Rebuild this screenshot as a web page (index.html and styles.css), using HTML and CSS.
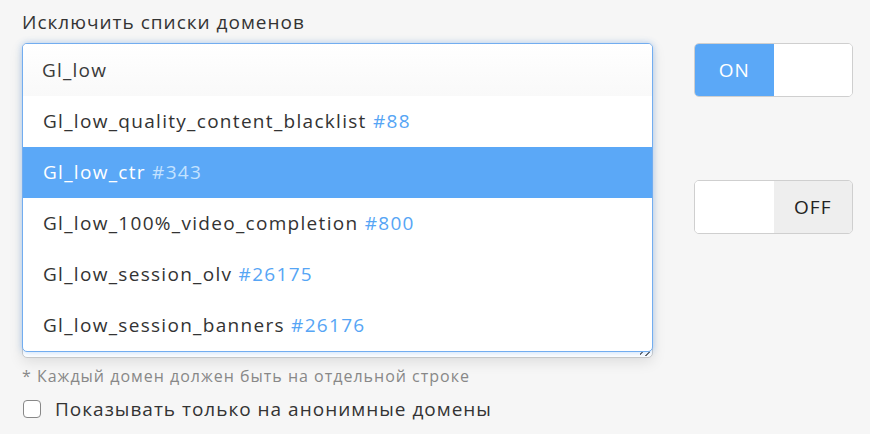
FILE: index.html
```html
<!DOCTYPE html>
<html lang="ru">
<head>
<meta charset="utf-8">
<link rel="stylesheet" href="styles.css">
</head>
<body>
<div class="page">
  <div class="title">Исключить списки доменов</div>
  <div class="row">
    <div class="left">
      <div class="textarea">
        <span class="grip"></span>
        <div class="combo">
          <div class="combo-input">Gl_low</div>
          <ul class="options">
            <li class="opt">Gl_low_quality_content_blacklist <span class="id">#88</span></li>
            <li class="opt active">Gl_low_ctr <span class="id">#343</span></li>
            <li class="opt">Gl_low_100%_video_completion <span class="id">#800</span></li>
            <li class="opt">Gl_low_session_olv <span class="id">#26175</span></li>
            <li class="opt">Gl_low_session_banners <span class="id">#26176</span></li>
          </ul>
        </div>
      </div>
    </div>
    <div class="right">
      <div class="toggle on"><span class="half blue">ON</span><span class="half white"></span></div>
      <div class="toggle off"><span class="half white"></span><span class="half grey">OFF</span></div>
    </div>
  </div>
  <div class="hint">* Каждый домен должен быть на отдельной строке</div>
  <label class="check"><span class="box"></span>Показывать только на анонимные домены</label>
</div>
</body>
</html>
```
FILE: styles.css
```css
* { box-sizing: border-box; }
html, body { margin: 0; padding: 0; background: #f6f6f6; }
body { font-family: "Open Sans", "Liberation Sans", sans-serif; color: #333; }
.page { padding: 9px 0 0 22px; width: 870px; height: 434px; overflow: hidden; }
.title { font-size: 19px; letter-spacing: 1px; line-height: 26px; color: #333; height: 34px; }
.row { display: flex; gap: 41px; }
.left { width: 631px; }
.textarea {
  position: relative;
  height: 315px;
  background: #fff;
  border: 1px solid #c8c8c8;
  border-radius: 5px;
  box-shadow: 0 4px 14px rgba(0,0,0,0.10);
}
.grip {
  position: absolute; right: 2px; bottom: 1px; width: 10px; height: 5px;
  background: repeating-linear-gradient(135deg, transparent 0 2px, #666 2px 3px, transparent 3px 5px);
}
.combo {
  position: absolute; top: -1px; left: -1px; width: 631px;
  background: #fff;
  border: 1px solid #72adf0;
  border-radius: 5px;
  box-shadow: 0 0 6px rgba(100,165,240,0.45);
  overflow: hidden;
}
.combo-input {
  height: 52px; padding: 0 0 0 19px;
  font-size: 19px; letter-spacing: 1.2px; line-height: 52px; color: #3a3a3a;
  background: linear-gradient(#fff, #f9f9f9);
}
.options { list-style: none; margin: 0; padding: 0; }
.opt { height: 51px; line-height: 51px; padding-left: 20px; font-size: 19px; letter-spacing: 1.3px; color: #333; white-space: nowrap; }
.opt .id { color: #56a5f5; }
.opt.active { background: #5ba8f7; color: #fff; }
.opt.active .id { color: #c3e2ff; }
.right { display: flex; flex-direction: column; gap: 83px; }
.toggle {
  display: flex; width: 159px; height: 54px;
  border: 1px solid #cfcfcf; border-radius: 5px; overflow: hidden;
}
.half { width: 50%; display: flex; align-items: center; justify-content: center; font-size: 19px; letter-spacing: 1px; }
.blue { background: #5ba8f7; color: #fff; }
.white { background: #fff; }
.grey { background: #eeeeee; color: #222; }
.hint { margin-top: 8px; font-size: 16px; letter-spacing: 1px; color: #888; line-height: 20px; }
.check { display: flex; align-items: center; margin-top: 11px; font-size: 19px; letter-spacing: 1px; color: #333; line-height: 24px; }
.box {
  width: 18px; height: 18px; border: 1.5px solid #888; border-radius: 4px; background: #fff;
  margin: 0 14px 0 1px;
}
```
